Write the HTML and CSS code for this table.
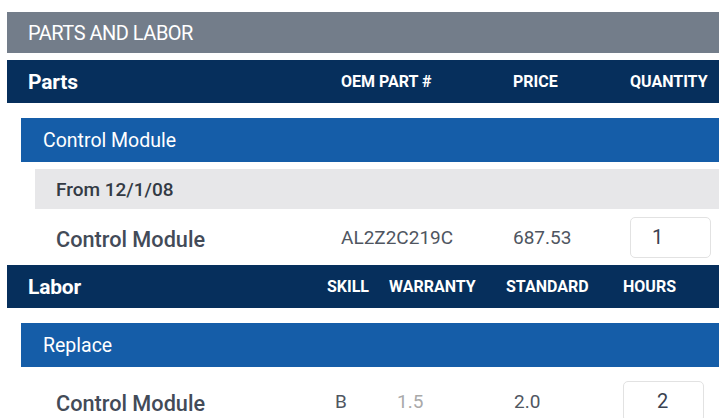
FILE: index.html
```html
<!DOCTYPE html>
<html>
<head>
<meta charset="utf-8">
<link rel="stylesheet" href="styles.css">
</head>
<body>
<div class="panel">
  <div class="title">PARTS AND LABOR</div>

  <div class="head head-first parts-cols">
    <div class="name">Parts</div>
    <div>OEM PART #</div>
    <div>PRICE</div>
    <div>QUANTITY</div>
  </div>
  <div class="group">Control Module</div>
  <div class="sub">From 12/1/08</div>
  <div class="row parts-cols">
    <div class="item">Control Module</div>
    <div class="val">AL2Z2C219C</div>
    <div class="val">687.53</div>
    <div><div class="qty qty-parts">1</div></div>
  </div>

  <div class="head labor-cols">
    <div class="name">Labor</div>
    <div>SKILL</div>
    <div>WARRANTY</div>
    <div>STANDARD</div>
    <div>HOURS</div>
  </div>
  <div class="group">Replace</div>
  <div class="row labor-row labor-cols">
    <div class="item">Control Module</div>
    <div class="val pad">B</div>
    <div class="val pad muted">1.5</div>
    <div class="val pad">2.0</div>
    <div><div class="qty qty-hours">2</div></div>
  </div>
</div>
</body>
</html>
```
FILE: styles.css
```css
html, body {
  margin: 0;
  padding: 0;
  background: #ffffff;
  font-family: Roboto, "Liberation Sans", sans-serif;
  overflow: hidden;
}

.panel {
  margin-left: 7px;
  padding-top: 12px;
  display: flex;
  flex-direction: column;
}

.title {
  height: 41px;
  background: #737d8a;
  color: #ffffff;
  font-size: 20px;
  letter-spacing: -0.5px;
  padding-left: 21px;
  display: flex;
  align-items: center;
}

.head {
  height: 43px;
  background: #062f5c;
  color: #ffffff;
  font-size: 16px;
  font-weight: 700;
  align-items: center;
}

.head-first {
  margin-top: 7px;
}

.head .name {
  font-size: 21px;
  padding-left: 21px;
  letter-spacing: -0.2px;
}

.parts-cols {
  display: grid;
  grid-template-columns: 334px 172px 117px 1fr;
}

.labor-cols {
  display: grid;
  grid-template-columns: 320px 62px 117px 117px 1fr;
}

.group {
  margin-top: 15px;
  margin-left: 14px;
  height: 44px;
  background: #155da8;
  color: #ffffff;
  font-size: 19.5px;
  padding-left: 22px;
  display: flex;
  align-items: center;
}

.sub {
  margin-top: 7px;
  margin-left: 28px;
  height: 40px;
  background: #e7e7e9;
  color: #333a44;
  font-size: 19px;
  font-weight: 500;
  padding-left: 21px;
  display: flex;
  align-items: center;
}

.row {
  height: 56px;
  align-items: center;
}

.labor-row {
  height: 68px;
}

.item {
  padding-left: 49px;
  font-size: 21.7px;
  font-weight: 500;
  color: #434b58;
  padding-top: 4px;
}

.val {
  font-size: 19px;
  color: #4f5661;
}

.val.pad {
  padding-left: 8px;
}

.val.muted {
  color: #a9a9a9;
}

.qty {
  box-sizing: border-box;
  width: 81px;
  height: 41px;
  border: 1px solid #e2e2e2;
  border-radius: 5px;
  display: flex;
  align-items: center;
  font-size: 20px;
  color: #3a4250;
}

.qty-parts {
  padding-left: 21px;
}

.qty-hours {
  padding-left: 33px;
}
```
